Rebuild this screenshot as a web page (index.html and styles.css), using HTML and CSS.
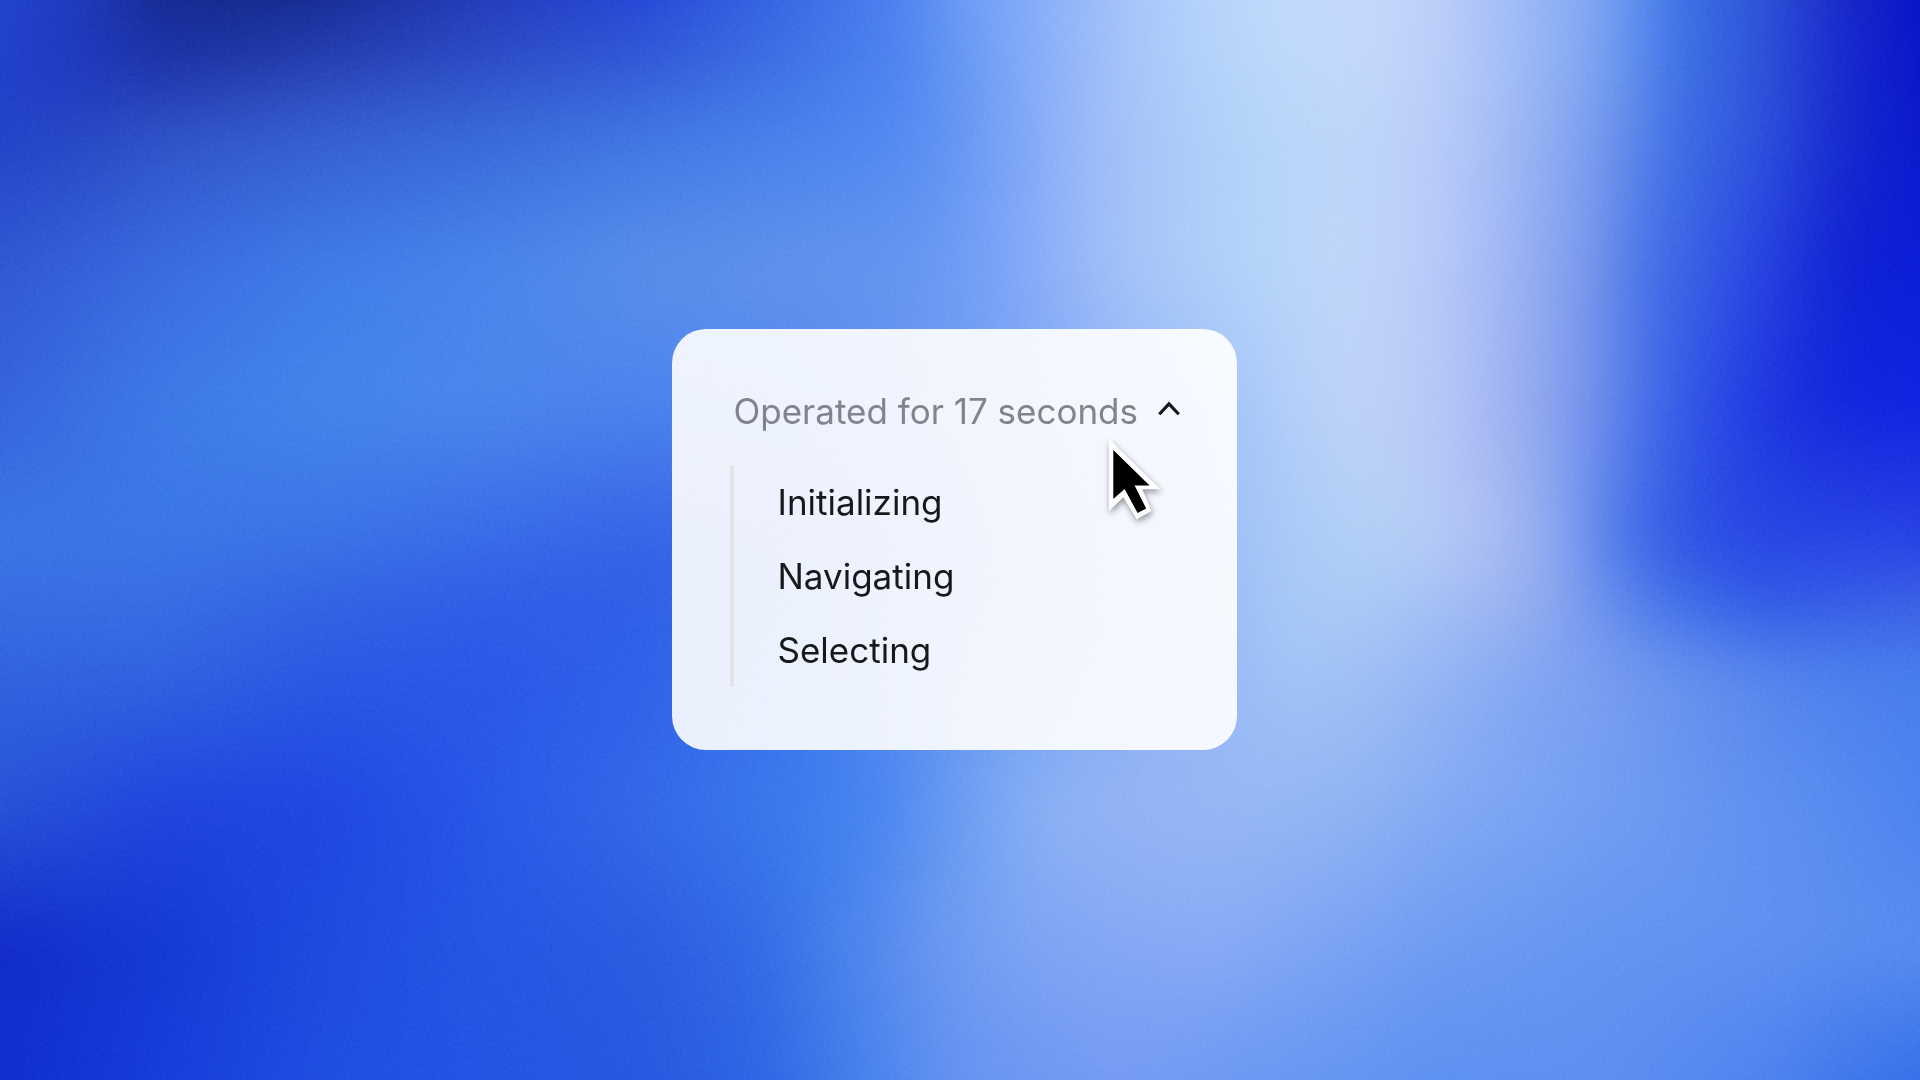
FILE: index.html
```
<!DOCTYPE html>
<html lang="en">
<head>
<meta charset="utf-8">
<meta name="viewport" content="width=device-width, initial-scale=1">
<title>Operated for 17 seconds</title>
<link rel="stylesheet" href="styles.css">
</head>
<body>
<div class="wallpaper" aria-hidden="true">
  <div class="band band-1"></div>
  <div class="band band-2"></div>
  <div class="band band-3"></div>
  <div class="band band-4"></div>
  <div class="band band-5"></div>
  <div class="band band-6"></div>
  <div class="band band-7"></div>
  <div class="band band-8"></div>
  <div class="band band-9"></div>
  <div class="band band-10"></div>
  <div class="band band-11"></div>
  <div class="soften"></div>
  <svg class="grain">
    <filter id="grain" x="0" y="0" width="100%" height="100%">
      <feTurbulence type="fractalNoise" baseFrequency="0.3" numOctaves="3" seed="4"/>
      <feColorMatrix values="1 0 0 0 0  1 0 0 0 0  1 0 0 0 0  0 0 0 0 1"/>
    </filter>
    <rect width="100%" height="100%" filter="url(#grain)"/>
  </svg>
</div>
<main class="stage">
  <section class="card">
    <button class="summary" type="button" aria-expanded="true" aria-controls="steps">
      <span>Operated for 17 seconds</span>
      <svg class="chevron" viewBox="0 0 24 24" aria-hidden="true"><path d="M3 15 12 5.500l9 9.500"/></svg>
    </button>
    <ul class="steps" id="steps">
      <li>Initializing</li>
      <li>Navigating</li>
      <li>Selecting</li>
    </ul>
    <svg class="cursor" viewBox="0 0 54 84" aria-hidden="true">
      <path fill="#fff" d="M1 0V72L15.300 58.300 28.600 80.300 43.600 72 34.300 50.300H52.500Z"/>
      <path fill="#000" d="M5.300 11V60L16.600 50 29.600 74 38.200 69.600 26.600 46.600H41.600Z"/>
    </svg>
  </section>
</main>
</body>
</html>
```
FILE: styles.css
```
* {
  box-sizing: border-box;
}

body {
  margin: 0;
  font-family: Inter, "Liberation Sans", sans-serif;
  font-size: 35px;
  line-height: 44px;
  color: #17181a;
  background: #3a70e6;
}

/* Wallpaper: horizontal colour bands, each fading in over the one above it */
.wallpaper {
  position: fixed;
  inset: 0;
  overflow: hidden;
}

.band,
.soften,
.grain {
  position: absolute;
  inset: 0;
  width: 100%;
  height: 100%;
}

.soften {
  -webkit-backdrop-filter: blur(26px);
  backdrop-filter: blur(26px);
}

.grain {
  opacity: 0.12;
  mix-blend-mode: soft-light;
}

.band {
  -webkit-mask-image: linear-gradient(to bottom, transparent var(--from), #000 var(--to));
  mask-image: linear-gradient(to bottom, transparent var(--from), #000 var(--to));
}

.band-1 {
  -webkit-mask-image: none;
  mask-image: none;
  background: linear-gradient(to right, #2141cf 0%, #1c38ba 4.2%, #14288f 8.3%, #11268a 12.500%, #142890 16.7%, #2038b8 25%, #2243d6 33.3%, #3768e4 41.7%, #4c80f0 46.9%, #6a9af5 50%, #86aef8 54.2%, #a3c1fa 58.3%, #b4d2fa 62.500%, #bfdafc 66.7%, #c6d9fb 70.8%, #bccdf9 75%, #9bb9f6 79.2%, #7ba3f2 83.3%, #3a70e6 87.500%, #2c50d6 91.7%, #1829c8 95.8%, #0610c8 100%);
}

.band-2 {
  --from: 0%;
  --to: 6.3%;
  background: linear-gradient(to right, #1f3ecc 0%, #1c36bd 4.2%, #1b31a8 8.3%, #2038aa 12.500%, #2540b4 16.7%, #2c4cc6 25%, #3258d6 33.3%, #3f72e6 41.7%, #4c82f0 46.9%, #6394f4 50%, #86adf8 54.2%, #a3c1f9 58.3%, #b1d0f9 62.500%, #bbd8fb 66.7%, #c2d8fb 70.8%, #bacdf9 75%, #9db9f6 79.2%, #77a0f0 83.3%, #3a6ee5 87.500%, #2c50d9 91.7%, #1628ca 95.8%, #0713ca 100%);
}

.band-3 {
  --from: 6.3%;
  --to: 12.500%;
  background: linear-gradient(to right, #2040c8 0%, #2444c2 4.2%, #2d50c6 8.3%, #345cd0 16.7%, #3667d8 25%, #3d74e2 33.3%, #4580ec 41.7%, #5087f2 46.9%, #6394f4 50%, #86abf8 54.2%, #a2c0f8 58.3%, #adcdf8 62.500%, #b6d6fa 66.7%, #bdd5fa 70.8%, #b8cbf8 75%, #9ab5f5 79.2%, #7398ee 83.3%, #3a6ae4 87.500%, #2c4fdc 91.7%, #1428cc 95.8%, #0916cc 100%);
}

.band-4 {
  --from: 12.500%;
  --to: 25%;
  background: linear-gradient(to right, #2f55d2 0%, #3868e0 8.3%, #3c7ae8 16.7%, #4583ea 25%, #568cea 33.3%, #6090ec 41.7%, #6293f0 46.9%, #6c9af5 50%, #86abf8 54.2%, #a2c0f8 58.3%, #accdf8 62.500%, #b6d5fa 66.7%, #c0d5fa 70.8%, #b6c8f8 75%, #98aff3 79.2%, #6f92ea 83.3%, #4670e6 85.4%, #3a62e6 87.500%, #2540e0 91.7%, #0e20d2 95.8%, #0a1cd6 100%);
}

.band-5 {
  --from: 25%;
  --to: 37.500%;
  background: linear-gradient(to right, #3360dc 0%, #3a78e6 8.3%, #4083e9 16.7%, #4884ea 25%, #4880ec 33.3%, #5084f0 41.7%, #6e98f4 50%, #8eb4f8 58.3%, #a5c4f8 64.6%, #b0cdf9 66.7%, #bfd2f8 70.8%, #b5c6f7 75%, #99acf0 79.2%, #6a8ceb 83.3%, #4870e8 85.4%, #3358e6 87.500%, #1c34e0 91.7%, #1024dc 95.8%, #0e22e0 100%);
}

.band-6 {
  --from: 37.500%;
  --to: 50%;
  background: linear-gradient(to right, #3874e4 0%, #3874e6 8.3%, #3870e6 16.7%, #3568e8 25%, #335fe6 33.3%, #3c6cea 41.7%, #5c8cf2 50%, #84acf6 58.3%, #9fc0f7 64.6%, #a6c8f6 66.7%, #b0cff6 70.8%, #b4ccf5 74%, #aebff4 77.1%, #9cb2f1 79.2%, #85a5f0 81.3%, #5a82ea 83.3%, #3e68e6 85.4%, #2e50e4 87.500%, #2543e2 91.7%, #2640e4 100%);
}

.band-7 {
  --from: 50%;
  --to: 55.6%;
  background: linear-gradient(to right, #356ae2 0%, #366ae4 8.3%, #3060e2 16.7%, #2e5ae6 25%, #2c5ce6 33.3%, #3a6eec 41.7%, #608ff2 50%, #84acf5 58.3%, #9cbdf6 64.6%, #a6c8f6 66.7%, #a9caf5 70.8%, #a3bef5 75%, #9ab0f0 79.2%, #6c92ee 83.3%, #4e7aea 85.4%, #3e6ce8 87.500%, #2d55e6 91.7%, #3358e6 95.8%, #3a5ee4 100%);
}

.band-8 {
  --from: 55.6%;
  --to: 62.500%;
  background: linear-gradient(to right, #2f60de 0%, #2e60e0 8.3%, #2855e2 16.7%, #2855e6 25%, #2c5ee8 33.3%, #3a72ee 41.7%, #6494f2 50%, #86adf4 58.3%, #98baf6 64.6%, #a0c3f6 66.7%, #9fbef5 70.8%, #92b3f5 75%, #80a6f2 79.2%, #789cf0 83.3%, #6590ee 87.500%, #5684ec 91.7%, #4a7fec 95.8%, #457aec 100%);
}

.band-9 {
  --from: 62.500%;
  --to: 75%;
  background: linear-gradient(to right, #2650d6 0%, #1e40dc 8.3%, #1d43e0 16.7%, #2554e6 25%, #3066e8 33.3%, #387aec 41.7%, #4583f0 45.8%, #6a9bf2 50%, #88b0f4 54.2%, #92b2f5 58.3%, #94b6f5 64.6%, #8cb2f3 70.8%, #80a8f3 75%, #78a2f3 79.2%, #6795f1 87.500%, #5e8ef2 91.7%, #5589ef 95.8%, #4a80ef 100%);
}

.band-10 {
  --from: 75%;
  --to: 87.500%;
  background: linear-gradient(to right, #1129c6 0%, #1236d2 8.3%, #1c48dd 16.7%, #2252e2 25%, #2858e0 33.3%, #3068e6 39.6%, #4481ea 43.8%, #5c8cf0 46.9%, #6d9af2 50%, #7ca3f3 54.2%, #86a9f5 62.500%, #7fa5f4 66.7%, #6c99f2 75%, #6293f2 83.3%, #5e8ef2 91.7%, #558aee 100%);
}

.band-11 {
  --from: 87.500%;
  --to: 100%;
  background: linear-gradient(to right, #0f2bce 0%, #163ada 8.3%, #1d4be0 16.7%, #2052e2 25%, #2356de 33.3%, #2c62e4 39.6%, #3c7ae8 43.8%, #4f86ee 46.9%, #6490f2 50%, #7299f3 58.3%, #6594f2 66.7%, #5a8ef2 75%, #5c8cf0 83.3%, #4c80ee 91.7%, #3c74ea 95.8%, #306ce8 100%);
}

.stage {
  position: relative;
  display: flex;
  align-items: center;
  justify-content: center;
  min-height: 100vh;
  padding: 24px 32px 26px 20px;
}

.card {
  position: relative;
  width: 100%;
  max-width: 565px;
  padding: 60px 52px 63px 58px;
  border-radius: 34px;
  background: rgba(255, 255, 255, 0.9);
}

.summary {
  display: flex;
  align-items: center;
  gap: 18px;
  margin: 0 0 32px;
  padding: 0 0 0 4px;
  border: 0;
  background: none;
  font: inherit;
  color: #82838d;
  white-space: nowrap;
}

.chevron {
  flex: none;
  width: 26px;
  height: 26px;
  fill: none;
  stroke: #17181a;
  stroke-width: 3;
}

.steps {
  margin: 0;
  padding: 0 0 0 44px;
  border-left: 4px solid #e4e4e8;
  list-style: none;
}

.steps li {
  padding: 15px 0;
}

.cursor {
  position: absolute;
  top: 110px;
  left: 436px;
  width: 54px;
  height: 84px;
  overflow: visible;
  filter: drop-shadow(1px 3px 3px rgba(0, 0, 0, 0.4));
  pointer-events: none;
}
```
